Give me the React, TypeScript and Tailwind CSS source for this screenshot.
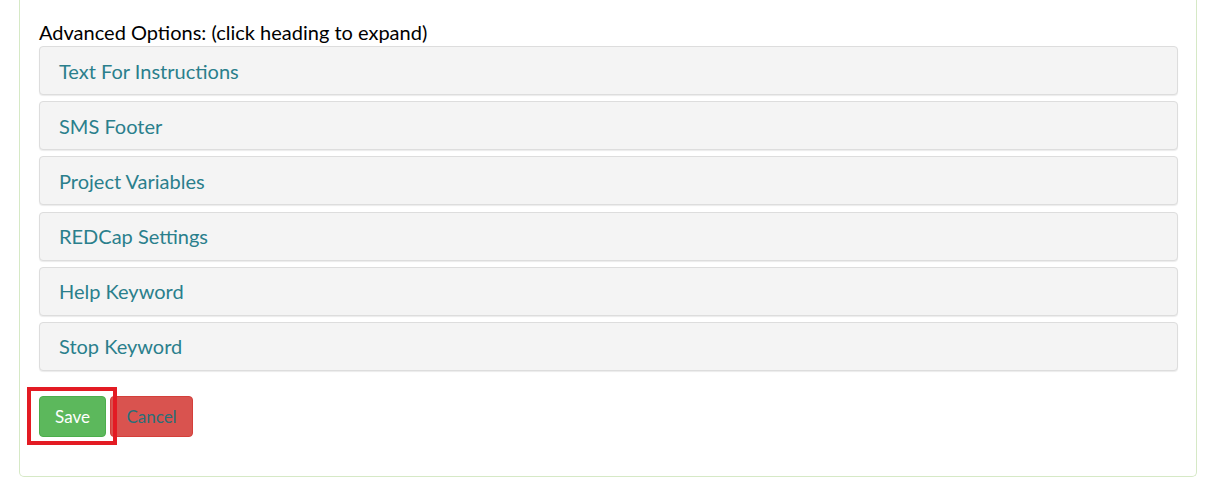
const sections = [
  'Text For Instructions',
  'SMS Footer',
  'Project Variables',
  'REDCap Settings',
  'Help Keyword',
  'Stop Keyword',
]

export default function App() {
  return (
    <div className="min-h-[497px] bg-white font-['Lato','Liberation_Sans',sans-serif]">
      <div className="ml-[19px] mr-[18px] h-[477px] rounded-b-[5px] border border-t-0 border-[#d6e9c6] bg-white pl-[19px] pr-[18px] pt-[20px]">
        <p className="text-[20px] leading-[24px] text-black">
          Advanced Options: (click heading to expand)
        </p>

        <div className="mt-[2px] flex flex-col gap-[6.2px]">
          {sections.map((title) => (
            <div
              key={title}
              className="flex h-[49px] items-center rounded-[4px] border border-[#dddddd] bg-[#f4f4f4] pl-[19px] shadow-[0_1px_1px_rgba(0,0,0,0.08)]"
            >
              <span className="cursor-pointer text-[20px] leading-none text-[#2a7f8c]">{title}</span>
            </div>
          ))}
        </div>

        <div className="mt-[25px] flex items-center gap-[4px]">
          <div className="relative">
            <button
              type="button"
              className="flex h-[41px] w-[67px] items-center justify-center rounded-[4px] border border-[#4cae4c] bg-[#5cb85c] text-[17px] text-white"
            >
              Save
            </button>
            <span className="pointer-events-none absolute -top-[9px] -bottom-[8px] -left-[12px] -right-[11px] z-10 border-4 border-[#e31b23]" />
          </div>
          <button
            type="button"
            className="flex h-[41px] w-[83px] items-center justify-center rounded-[4px] border border-[#d43f3a] bg-[#d9534f] text-[17px] text-[#2a6f78]"
          >
            Cancel
          </button>
        </div>
      </div>
    </div>
  )
}
